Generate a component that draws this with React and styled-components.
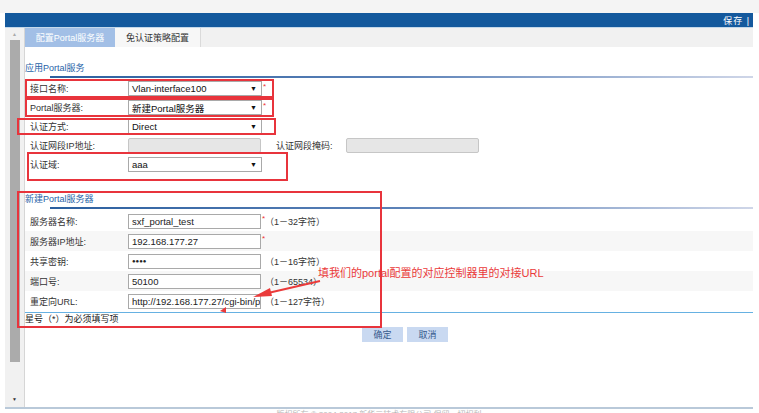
import React from 'react'
import styled, { createGlobalStyle } from 'styled-components'

const GlobalStyle = createGlobalStyle`
  html, body {
    margin: 0;
    padding: 0;
    background: #fff;
  }
  body {
    font-family: "Liberation Sans", "Noto Sans CJK SC", sans-serif;
  }
`

const Page = styled.div`
  position: relative;
  width: 759px;
  height: 413px;
  overflow: hidden;
  background: #fff;
  font-size: 9px;
  color: #333;
`

const TopStrip = styled.div`
  height: 13px;
  background: #f4f4f4;
`

const Frame = styled.div`
  margin: 0 6px 0 5px;
`

const BlueBar = styled.div`
  height: 14px;
  background: #14599d;
  border-bottom: 1px solid #c4d8ea;
  display: flex;
  justify-content: flex-end;
  align-items: center;
  padding-right: 3px;
  color: #fff;
  font-size: 9px;
  letter-spacing: 1px;
`

const Body = styled.div`
  display: flex;
  height: 379px;
  border-bottom: 2px solid #b9c9d9;
`

const Scroll = styled.div`
  width: 19px;
  background: #f1f1f1;
  border-right: 1px solid #d6d6d6;
  display: flex;
  flex-direction: column;
  align-items: center;
`

const ScrollArrow = styled.div`
  height: 12px;
  line-height: 12px;
  font-size: 5px;
  color: ${p => p.$dark ? '#333' : '#aaa'};
  margin-top: ${p => p.$bottom ? 'auto' : '0'};
  margin-bottom: ${p => p.$bottom ? '2px' : '0'};
`

const Thumb = styled.div`
  width: 10px;
  height: 322px;
  background: #ababab;
`

const Main = styled.div`
  flex: 1;
  display: flex;
  flex-direction: column;
`

const TabBar = styled.div`
  height: 19px;
  background: #f1f1f1;
  display: flex;
`

const Tab = styled.div`
  width: ${p => p.$w}px;
  display: flex;
  align-items: center;
  justify-content: center;
  background: ${p => p.$active ? '#a2bfe6' : '#f7f7f7'};
  color: ${p => p.$active ? '#fff' : '#333'};
  border-right: ${p => p.$active ? 'none' : '1px solid #dadada'};
  font-size: 9px;
`

const Content = styled.div`
  padding-top: 15px;
`

const SectionTitle = styled.div`
  height: 13px;
  line-height: 13px;
  margin-top: ${p => p.$top || 0}px;
  color: #2863a8;
  font-size: 9px;
`

const Rule = styled.div`
  margin: 1px 0 0 25px;
  height: 2px;
  background: linear-gradient(to right, #2b5f9f 0%, #5c82b8 50%, #cfd6e8 100%);
`

const Rows = styled.div`
  margin-top: ${p => p.$top}px;
`

const Row = styled.div`
  display: flex;
  align-items: center;
  height: ${p => p.$h}px;
  padding-left: 5px;
  background: ${p => p.$stripe ? '#f7f7f7' : 'transparent'};
`

const Label = styled.div`
  width: ${p => p.$w || 98}px;
  flex-shrink: 0;
  color: #333;
  font-size: 9px;
`

const Select = styled.div`
  width: 129px;
  height: 13px;
  border: 1px solid #a9a9a9;
  background: #fff;
  display: flex;
  align-items: center;
  justify-content: space-between;
  padding: 0 0 0 3px;
  box-sizing: content-box;
  font-size: 9.5px;
  color: #111;
`

const Arrow = styled.span`
  font-size: 7px;
  color: #111;
  padding-right: 4px;
`

const Input = styled.div`
  width: 128px;
  height: 13px;
  border: 1px solid ${p => p.$disabled ? '#c6c6c6' : '#a9a9a9'};
  border-radius: ${p => p.$disabled ? '2px' : '0'};
  background: ${p => p.$disabled ? '#e6e6e6' : '#fff'};
  padding-left: 3px;
  display: flex;
  align-items: center;
  font-size: 9.5px;
  color: #222;
  white-space: nowrap;
  overflow: hidden;
  margin-right: ${p => p.$gap || 0}px;
`

const Dots = styled.span`
  font-size: 6px;
  letter-spacing: 0;
  color: #222;
`

const Star = styled.span`
  width: 3px;
  margin-left: 1px;
  align-self: flex-start;
  padding-top: 3px;
  color: #e33;
  font-size: 8px;
`

const Hint = styled.span`
  color: #333;
  font-size: 9px;
`

const BlueLine = styled.div`
  height: 1px;
  background: #66b1e2;
  margin-top: 1px;
`

const Note = styled.div`
  height: 12px;
  line-height: 12px;
  color: #222;
  font-size: 9px;
`

const Buttons = styled.div`
  display: flex;
  gap: 4px;
  padding-left: 337px;
  margin-top: 2px;
`

const Button = styled.div`
  width: 41px;
  height: 15px;
  background: #c9d9f1;
  color: #35598c;
  display: flex;
  align-items: center;
  justify-content: center;
  font-size: 9px;
`

const Footer = styled.div`
  text-align: center;
  color: #b8b8b8;
  font-size: 8px;
  line-height: 10px;
  margin-top: 1px;
`

const RedBox = styled.div`
  position: absolute;
  left: ${p => p.$x}px;
  top: ${p => p.$y}px;
  width: ${p => p.$w}px;
  height: ${p => p.$h}px;
  border: 2px solid #e8343c;
  box-sizing: border-box;
  pointer-events: none;
`

const Callout = styled.div`
  position: absolute;
  left: 318px;
  top: 266px;
  color: #ea3a3a;
  font-size: 11px;
  line-height: 14px;
  white-space: nowrap;
`

const CalloutArrow = styled.svg`
  position: absolute;
  left: 210px;
  top: 276px;
  overflow: visible;
`

const firstRows = [
  { label: '接口名称:', kind: 'select', value: 'Vlan-interface100', star: true },
  { label: 'Portal服务器:', kind: 'select', value: '新建Portal服务器', star: true },
  { label: '认证方式:', kind: 'select', value: 'Direct' },
  { label: '认证网段IP地址:', kind: 'pair' },
  { label: '认证域:', kind: 'select', value: 'aaa' },
]

const serverRows = [
  { label: '服务器名称:', value: 'sxf_portal_test', star: true, hint: '（1－32字符）' },
  { label: '服务器IP地址:', value: '192.168.177.27', star: true },
  { label: '共享密钥:', value: <Dots>●●●●</Dots>, hint: '（1－16字符）' },
  { label: '端口号:', value: '50100', hint: '（1－65534）' },
  { label: '重定向URL:', value: 'http://192.168.177.27/cgi-bin/poi', hint: '（1－127字符）' },
]

function FirstRow({ row }) {
  if (row.kind === 'pair') {
    return (
      <Row $h={19}>
        <Label>{row.label}</Label>
        <Input $disabled $gap={15} />
        <Label $w={70}>认证网段掩码:</Label>
        <Input $disabled />
      </Row>
    )
  }
  return (
    <Row $h={19}>
      <Label>{row.label}</Label>
      <Select>
        <span>{row.value}</span>
        <Arrow>▼</Arrow>
      </Select>
      <Star>{row.star ? '*' : ''}</Star>
    </Row>
  )
}

export default function App() {
  return (
    <Page>
      <GlobalStyle />
      <TopStrip />
      <Frame>
        <BlueBar>保存 |</BlueBar>
        <Body>
          <Scroll>
            <ScrollArrow>▲</ScrollArrow>
            <Thumb />
            <ScrollArrow $bottom $dark>▼</ScrollArrow>
          </Scroll>
          <Main>
            <TabBar>
              <Tab $w={90} $active>配置Portal服务器</Tab>
              <Tab $w={85}>免认证策略配置</Tab>
            </TabBar>
            <Content>
              <SectionTitle>应用Portal服务</SectionTitle>
              <Rule />
              <Rows $top={1}>
                {firstRows.map(row => (
                  <FirstRow key={row.label} row={row} />
                ))}
              </Rows>

              <SectionTitle $top={19}>新建Portal服务器</SectionTitle>
              <Rule />
              <Rows $top={2}>
                {serverRows.map((row, i) => (
                  <Row key={row.label} $h={20} $stripe={i % 2 === 1}>
                    <Label>{row.label}</Label>
                    <Input>{row.value}</Input>
                    <Star>{row.star ? '*' : ''}</Star>
                    {row.hint && <Hint>{row.hint}</Hint>}
                  </Row>
                ))}
              </Rows>
              <BlueLine />
              <Note>星号（*）为必须填写项</Note>
              <Buttons>
                <Button>确定</Button>
                <Button>取消</Button>
              </Buttons>
            </Content>
          </Main>
        </Body>
        <Footer>版权所有 © 2004-2017 新华三技术有限公司 保留一切权利</Footer>
      </Frame>

      <RedBox $x={25} $y={79} $w={249} $h={19} />
      <RedBox $x={25} $y={98} $w={249} $h={19} />
      <RedBox $x={17} $y={118} $w={259} $h={17} />
      <RedBox $x={27} $y={152} $w={261} $h={29} />
      <RedBox $x={17} $y={191} $w={365} $h={137} />

      <Callout>填我们的portal配置的对应控制器里的对接URL</Callout>
      <CalloutArrow width="120" height="40" viewBox="0 0 120 40">
        <path d="M110 5 L58 17" stroke="#ea3a3a" strokeWidth="2" fill="none" />
        <path d="M43 21 L60 12 L62 20 Z" fill="#ea3a3a" />
        <path d="M10 35 L16 31 L16 37 Z" fill="#ea3a3a" />
      </CalloutArrow>
    </Page>
  )
}
